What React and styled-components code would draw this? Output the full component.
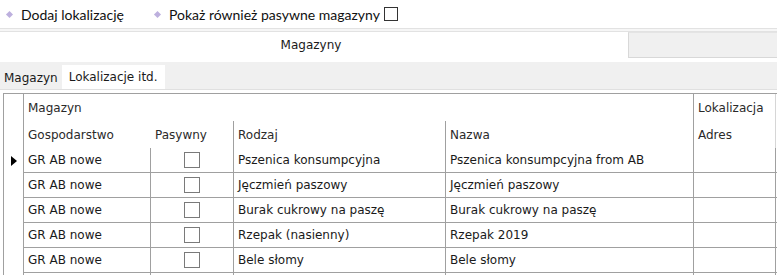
import React from "react";
import styled, { createGlobalStyle } from "styled-components";

const GlobalStyle = createGlobalStyle`
  body {
    margin: 0;
    background: #ffffff;
    font-family: "DejaVu Sans", "Noto Sans", sans-serif;
    color: #1a1a1a;
  }
`;

const rows = [
  { farm: "GR AB nowe", kind: "Pszenica konsumpcyjna", name: "Pszenica konsumpcyjna from AB", current: true },
  { farm: "GR AB nowe", kind: "Jęczmień paszowy", name: "Jęczmień paszowy" },
  { farm: "GR AB nowe", kind: "Burak cukrowy na paszę", name: "Burak cukrowy na paszę" },
  { farm: "GR AB nowe", kind: "Rzepak (nasienny)", name: "Rzepak 2019" },
  { farm: "GR AB nowe", kind: "Bele słomy", name: "Bele słomy" },
  { farm: "", kind: "", name: "" },
];

const Page = styled.div`
  width: 777px;
  height: 275px;
  overflow: hidden;
`;

const Toolbar = styled.div`
  display: flex;
  align-items: center;
  height: 28px;
  padding-left: 5px;
  font-family: "Lato", "DejaVu Sans", sans-serif;
  font-size: 14px;
  color: #111;
`;

const Action = styled.div`
  display: flex;
  align-items: center;
  gap: 9px;
  margin-right: 29px;
`;

const Diamond = styled.span`
  width: 5px;
  height: 5px;
  background: #bdb0de;
  transform: rotate(45deg);
  margin-left: 2px;
`;

const ToolCheck = styled.span`
  width: 12px;
  height: 12px;
  border: 1px solid #333333;
  background: #fff;
  margin-left: -5px;
`;

const Divider = styled.div`
  height: 2px;
  border-top: 1px solid #e2e2e2;
  border-bottom: 1px solid #e2e2e2;
  background: #f6f6f6;
`;

const TopTabs = styled.div`
  display: flex;
  height: 26px;
`;

const ActiveTopTab = styled.div`
  width: 628px;
  display: flex;
  align-items: center;
  justify-content: center;
  padding-right: 6px;
  box-sizing: border-box;
  font-size: 12px;
`;

const RestTopTab = styled.div`
  flex: 1;
  background: #f0f0f0;
  border-left: 1px solid #d8d8d8;
  border-top: 1px solid #e4e4e4;
  border-bottom: 1px solid #d8d8d8;
`;

const SubTabs = styled.div`
  display: flex;
  align-items: flex-end;
  height: 27px;
  margin-top: 4px;
  background: #f0f0f0;
  border-bottom: 1px solid #e0e0e0;
`;

const SubTab = styled.div`
  height: ${(p) => (p.$active ? "24px" : "22px")};
  display: flex;
  align-items: center;
  padding: 0 ${(p) => (p.$active ? "7px" : "4px")};
  background: ${(p) => (p.$active ? "#ffffff" : "transparent")};
  font-size: 12px;
`;

const Grid = styled.div`
  margin: 3px 0 0 3px;
  border-left: 1px solid #a0a0a0;
  border-top: 1px solid #a0a0a0;
  font-size: 12px;
`;

const Row = styled.div`
  display: grid;
  grid-template-columns: 20px 127px 83px 212px 248px 82px 1fr;
  height: ${(p) => p.$h}px;
`;

const Indicator = styled.div`
  border-right: 1px solid #a0a0a0;
  display: flex;
  align-items: center;
  justify-content: center;
`;

const HeadCell = styled.div`
  grid-column: span ${(p) => p.$span || 1};
  display: flex;
  align-items: center;
  padding-left: 4px;
  color: #2a2a2a;
  border-right: 1px solid ${(p) => (p.$line ? p.$line : "transparent")};
`;

const Cell = styled.div`
  display: flex;
  align-items: center;
  justify-content: ${(p) => (p.$center ? "center" : "flex-start")};
  padding-left: ${(p) => (p.$center ? "0" : "4px")};
  border-right: 1px solid ${(p) => (p.$end ? "transparent" : "#a0a0a0")};
  border-bottom: 1px solid #a0a0a0;
  white-space: nowrap;
  overflow: hidden;
`;

const Box = styled.span`
  width: 14px;
  height: 14px;
  border: 1px solid #7a7a7a;
  background: #fff;
`;

const Arrow = () => (
  <svg width="6" height="10" viewBox="0 0 6 10">
    <path d="M0 0 L6 5 L0 10 Z" fill="#000" />
  </svg>
);

export default function App() {
  return (
    <Page>
      <GlobalStyle />
      <Toolbar>
        <Action>
          <Diamond />
          Dodaj lokalizację
        </Action>
        <Action>
          <Diamond />
          <span>Pokaż również pasywne magazyny</span>
          <ToolCheck />
        </Action>
      </Toolbar>
      <Divider />
      <TopTabs>
        <ActiveTopTab>Magazyny</ActiveTopTab>
        <RestTopTab />
      </TopTabs>
      <SubTabs>
        <SubTab>Magazyn</SubTab>
        <SubTab $active>Lokalizacje itd.</SubTab>
      </SubTabs>
      <Grid>
        <Row $h={27}>
          <Indicator />
          <HeadCell $span={4} $line="#a0a0a0">Magazyn</HeadCell>
          <HeadCell $line="#d6d6d6">Lokalizacja</HeadCell>
          <HeadCell />
        </Row>
        <Row $h={27}>
          <Indicator />
          <HeadCell>Gospodarstwo</HeadCell>
          <HeadCell $line="#a0a0a0">Pasywny</HeadCell>
          <HeadCell $line="#a0a0a0">Rodzaj</HeadCell>
          <HeadCell $line="#a0a0a0">Nazwa</HeadCell>
          <HeadCell $line="#d6d6d6">Adres</HeadCell>
          <HeadCell />
        </Row>
        {rows.map((r, i) => (
          <Row $h={25} key={i}>
            <Indicator>{r.current ? <Arrow /> : null}</Indicator>
            <Cell>{r.farm}</Cell>
            <Cell $center>{r.farm ? <Box /> : null}</Cell>
            <Cell>{r.kind}</Cell>
            <Cell>{r.name}</Cell>
            <Cell />
            <Cell $end />
          </Row>
        ))}
      </Grid>
    </Page>
  );
}
